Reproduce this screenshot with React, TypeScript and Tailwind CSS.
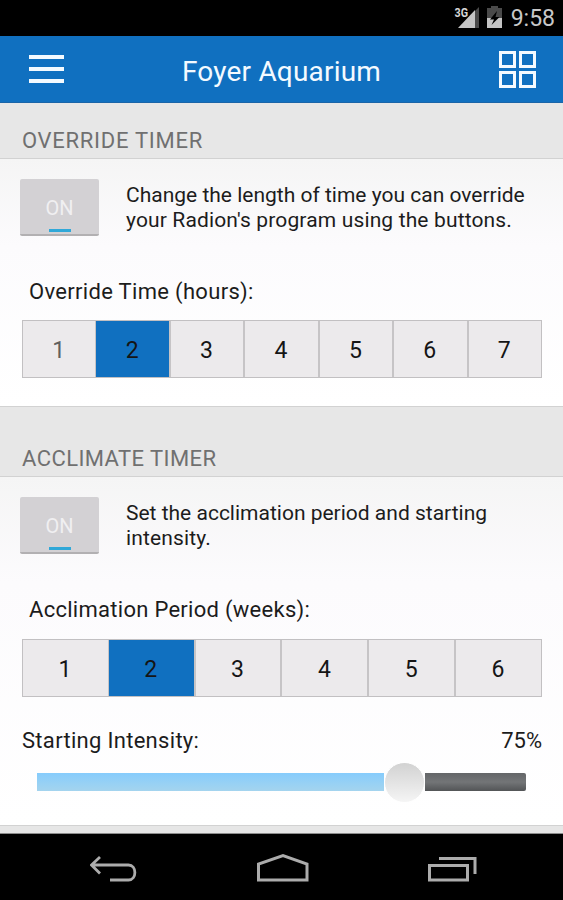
import clsx from 'clsx'

function StatusBar() {
  return (
    <div className="flex h-9 shrink-0 items-center justify-end bg-black">
      <svg width="26" height="24" viewBox="0 0 26 24" className="mr-[7px]">
        <path d="M25 1v21h-4V5z" fill="#4a4a4a" />
        <path d="M21 4v18H4z" fill="#c4c4c4" />
        <text x="0.500" y="11" fontSize="12" fontWeight="700" fontFamily="Roboto, sans-serif" fill="#d6d6d6" stroke="#000" strokeWidth="2" paintOrder="stroke" textLength="13.500" lengthAdjust="spacingAndGlyphs">
          3G
        </text>
      </svg>
      <svg width="15" height="24" viewBox="0 0 15 24" className="mr-[9px]">
        <path d="M4 0h7v2h4v10H0V2h4z" fill="#4a4a4a" />
        <path d="M0 12h15v10H0z" fill="#c4c4c4" />
        <path d="M10 5L3 13.500h4L4.500 19l8-8H8.500z" fill="#000" />
      </svg>
      <span className="mr-[8px] mt-0.5 text-[23px] leading-9 text-[#c8c8c8]">9:58</span>
    </div>
  )
}

function AppBar() {
  return (
    <header className="flex h-[67px] shrink-0 items-center justify-between border-b border-[#1a65a8] bg-[#1070c0] pl-[29px] pr-[27px]">
      <button className="flex w-[35px] flex-col gap-[7.5px]" aria-label="Menu">
        <span className="h-[4.5px] bg-[#f4faff]" />
        <span className="h-[4.5px] bg-[#f4faff]" />
        <span className="h-[4.5px] bg-[#f4faff]" />
      </button>
      <h1 className="mt-[5px] text-[28px] leading-9 tracking-[0.2px] text-[#f4faff]">Foyer Aquarium</h1>
      <button className="grid grid-cols-2 gap-[3px]" aria-label="Devices">
        {[0, 1, 2, 3].map((i) => (
          <span key={i} className="h-[17px] w-[17px] border-[3px] border-[#f4faff]" />
        ))}
      </button>
    </header>
  )
}

function SectionHeader({ title, className }: { title: string; className: string }) {
  return (
    <div className={clsx('flex shrink-0 items-end border-b border-[#d2d2d2] bg-[#e7e7e7] pl-[22px]', className)}>
      <h2 className="text-[22px] leading-[34px] text-[#707070]">{title}</h2>
    </div>
  )
}

function Toggle() {
  return (
    <button className="flex h-[57px] w-[79px] shrink-0 flex-col items-center rounded-[2px] border-b-2 border-[#b2b0b2] bg-[#d3d1d4] pt-[18px]">
      <span className="text-[20px] leading-[22px] text-[#f0eff1]">ON</span>
      <span className="mt-[10px] h-[3px] w-[22px] bg-[#30a8d8]" />
    </button>
  )
}

function Segments({ count, selected, dimFirst }: { count: number; selected: number; dimFirst?: boolean }) {
  return (
    <div className="ml-[22px] flex h-[58px] w-[520px] border border-[#c2c0c2] bg-[#eceaec]">
      {Array.from({ length: count }, (_, i) => i + 1).map((n) => (
        <button
          key={n}
          className={clsx(
            'flex flex-1 items-center justify-center pr-px pt-[4px] text-[23px]',
            n < count && 'border-r-2 border-[#c6c4c6]',
            n === selected && '-ml-px bg-[#1070c0]',
            n === 1 && dimFirst ? 'text-[#606060]' : 'text-[#151515]',
          )}
        >
          {n}
        </button>
      ))}
    </div>
  )
}

export default function App() {
  return (
    <div className="flex h-[900px] w-[563px] flex-col overflow-hidden whitespace-nowrap bg-white font-[Roboto,sans-serif] text-[#1c1c1c]">
      <StatusBar />
      <AppBar />

      <SectionHeader title="OVERRIDE TIMER" className="h-14 tracking-[0.72px]" />
      <section className="h-[247px] shrink-0 bg-linear-to-b from-[#f5f5f5] via-[#fcfbfd] via-35% to-white pt-5">
        <div className="flex pl-5">
          <Toggle />
          <p className="ml-[27px] mt-[4px] text-[21px] leading-[24.5px]">
            Change the length of time you can override
            <br />
            <span className="tracking-[0.14px]">your Radion's program using the buttons.</span>
          </p>
        </div>
        <h3 className="ml-[29px] mt-[42px] h-[42px] text-[22px] leading-[28px] tracking-[0.32px]">Override Time (hours):</h3>
        <Segments count={7} selected={2} dimFirst />
      </section>

      {/* Acclimate section */}
      <SectionHeader title="ACCLIMATE TIMER" className="h-[71px] border-t tracking-[0.42px]" />
      <section className="h-[348px] shrink-0 bg-linear-to-b from-[#f5f5f5] via-[#fcfbfd] via-30% to-white pt-5">
        <div className="flex pl-5">
          <Toggle />
          <p className="ml-[27px] mt-[4px] text-[21px] leading-[24.5px]">
            Set the acclimation period and starting
            <br />
            <span className="tracking-[0.14px]">intensity.</span>
          </p>
        </div>
        <h3 className="ml-[29px] mt-[42px] h-[43px] text-[22px] leading-[28px] tracking-[0.28px]">Acclimation Period (weeks):</h3>
        <Segments count={6} selected={2} />
        <div className="mt-[30px] flex justify-between pl-[22px] pr-[21px] text-[22px] leading-[28px]">
          <span className="tracking-[0.3px]">Starting Intensity:</span>
          <span>75%</span>
        </div>
        <div className="mx-[37px] mt-[7px] flex h-10 items-center">
          <div className="h-[18px] w-[347px] bg-linear-to-b from-[#86ccfc] to-[#a4d4ee]" />
          <div className="h-[41px] w-[41px] shrink-0 rounded-full border border-white bg-linear-to-b from-[#d2d2d2] to-[#f5f5f5]" />
          <div className="h-[18px] flex-1 rounded-r-[2px] bg-linear-to-b from-[#646668] via-[#737577] to-[#535557]" />
        </div>
      </section>

      <div className="h-[9px] shrink-0 border-b border-t border-b-[#8c8c8c] border-t-[#d2d2d2] bg-[#e6e6e6]" />

      <nav className="flex flex-1 justify-between bg-black pl-[90px] pr-[86px]">
        <svg width="48" height="66" viewBox="90 834 48 66" fill="none" stroke="#acacac" strokeWidth="2.800">
          <path d="M100 857l-8.500 8 8.500 8.500M91 865h37.500c8.500 0 8.500 15 0 15H110" />
        </svg>
        <svg width="54" height="66" viewBox="255 834 54 66" fill="none" stroke="#acacac" strokeWidth="3">
          <path d="M257.500 880v-16l24.500-8.500 24 8.500v16z" />
        </svg>
        <svg width="50" height="66" viewBox="427 834 50 66" fill="none" stroke="#acacac" strokeWidth="3">
          <path d="M429.500 865.500h38V880h-38zM439 858.500h36V874" />
        </svg>
      </nav>
    </div>
  )
}
